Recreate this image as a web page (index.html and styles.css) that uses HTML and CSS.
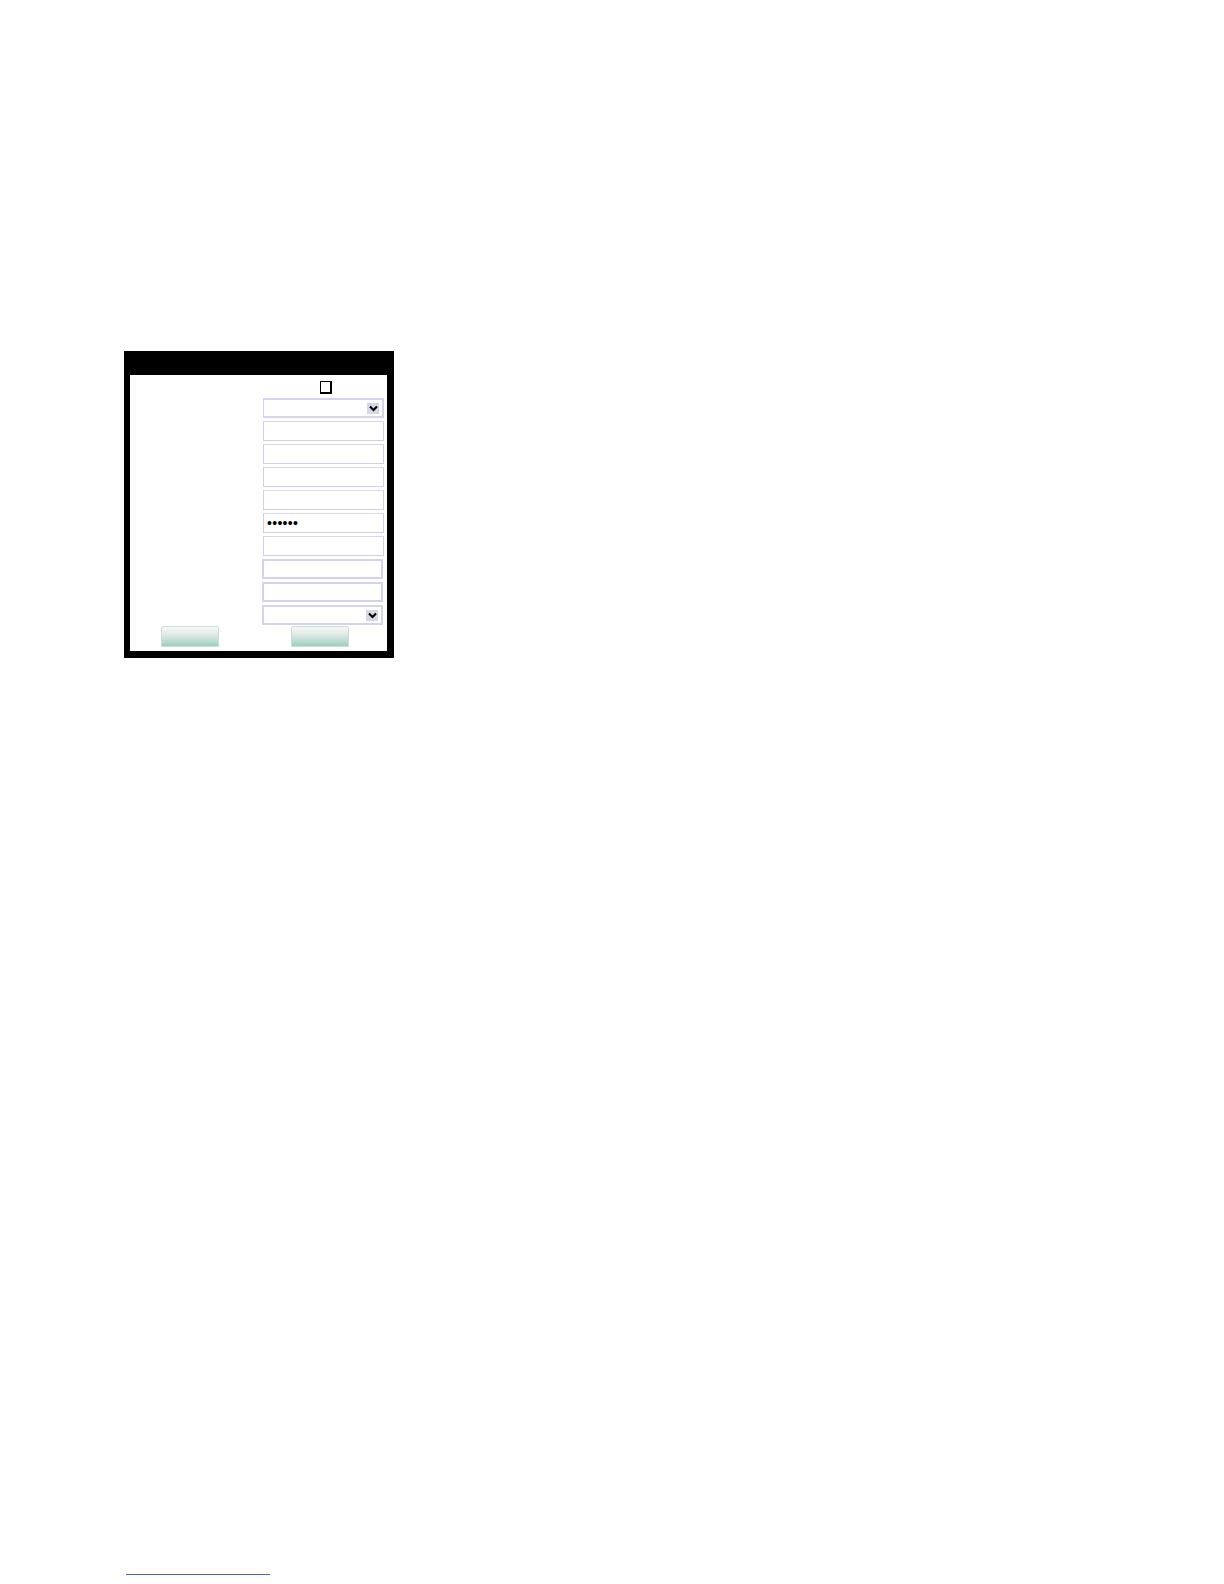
FILE: index.html
```html
<!DOCTYPE html>
<html>
<head>
<meta charset="utf-8">
<link rel="stylesheet" href="styles.css">
</head>
<body>
<div class="page">
  <div class="frame">
    <div class="panel">
      <div class="form">
        <div class="label"></div>
        <div class="cell center"><span class="checkbox"></span></div>

        <div class="label"></div>
        <div class="cell"><div class="select"><span class="arrow"><svg width="9" height="7" viewBox="0 0 9 7"><path d="M1 1.5 L4.5 5 L8 1.5" fill="none" stroke="#000" stroke-width="2.2"/></svg></span></div></div>

        <div class="label"></div>
        <div class="cell"><input class="field" type="text"></div>
        <div class="label"></div>
        <div class="cell"><input class="field" type="text"></div>
        <div class="label"></div>
        <div class="cell"><input class="field" type="text"></div>
        <div class="label"></div>
        <div class="cell"><input class="field" type="text"></div>
        <div class="label"></div>
        <div class="cell"><input class="field pw" type="password" value="123456"></div>
        <div class="label"></div>
        <div class="cell"><input class="field" type="text"></div>
        <div class="label"></div>
        <div class="cell"><input class="field alt" type="text"></div>
        <div class="label"></div>
        <div class="cell"><input class="field alt" type="text"></div>

        <div class="label"></div>
        <div class="cell"><div class="select alt"><span class="arrow"><svg width="9" height="7" viewBox="0 0 9 7"><path d="M1 1.5 L4.5 5 L8 1.5" fill="none" stroke="#000" stroke-width="2.2"/></svg></span></div></div>
      </div>
      <div class="buttons">
        <button class="btn" type="button"></button>
        <button class="btn" type="button"></button>
      </div>
    </div>
  </div>
  <div class="rule"></div>
</div>
</body>
</html>
```

FILE: styles.css
```css
html, body {
  margin: 0;
  padding: 0;
  background: #ffffff;
  font-family: "Liberation Sans", Arial, sans-serif;
}

.page {
  padding: 351px 0 0 124px;
}

.frame {
  width: 270px;
  box-sizing: border-box;
  background: #000000;
  padding: 24px 7px 7px 6px;
}

.panel {
  background: #ffffff;
  height: 276px;
  box-sizing: border-box;
  padding: 0 3px 4px 0;
  display: flex;
  flex-direction: column;
}

.form {
  display: grid;
  grid-template-columns: 133px 121px;
  grid-auto-rows: 20px;
  row-gap: 3px;
}

.cell {
  display: flex;
  align-items: stretch;
}

.cell.center {
  justify-content: center;
  align-items: flex-start;
}

.checkbox {
  display: block;
  width: 9px;
  height: 10px;
  margin-top: 6px;
  margin-left: 4px;
  border: 1px solid #000;
  border-right-width: 2px;
  border-bottom-width: 2px;
  background: #fff;
}

.field {
  display: block;
  width: 100%;
  height: 20px;
  box-sizing: border-box;
  margin: 0;
  padding: 0 3px;
  border: 1px solid #cfd0e2;
  border-top-color: #d9d9ea;
  background: #fff;
  font-family: "Liberation Sans", Arial, sans-serif;
  font-size: 14px;
  outline: none;
}

.field.alt {
  border: 2px solid #d2d2f0;
  margin-left: -1px;
}

.field.pw {
  color: #000;
  font-size: 14px;
  padding-left: 3px;
  letter-spacing: 0.3px;
}

.select {
  width: 100%;
  height: 20px;
  box-sizing: border-box;
  border: 2px solid #d4d4ee;
  border-left-width: 1px;
  background: #fff;
  display: flex;
  justify-content: flex-end;
  align-items: center;
  padding-right: 3px;
}

.select.alt {
  margin-left: -1px;
  border-left-width: 2px;
}

.arrow {
  width: 12px;
  height: 11px;
  background: #d5d8e8;
  display: flex;
  align-items: center;
  justify-content: center;
  margin-top: 1px;
}

.buttons {
  display: flex;
  gap: 72px;
  padding-left: 31px;
  margin-top: 1px;
}

.btn {
  width: 58px;
  height: 21px;
  margin: 0;
  padding: 0;
  border: 1px solid #cfdcd8;
  border-radius: 2px 2px 0 0;
  background: linear-gradient(to bottom, #f6f8f8 0%, #e2ece9 35%, #b8dcd0 75%, #9ecdbd 100%);
}

.rule {
  width: 144px;
  margin-top: 916px;
  margin-left: 2px;
  border-top: 1px solid #4a63c8;
}
```
